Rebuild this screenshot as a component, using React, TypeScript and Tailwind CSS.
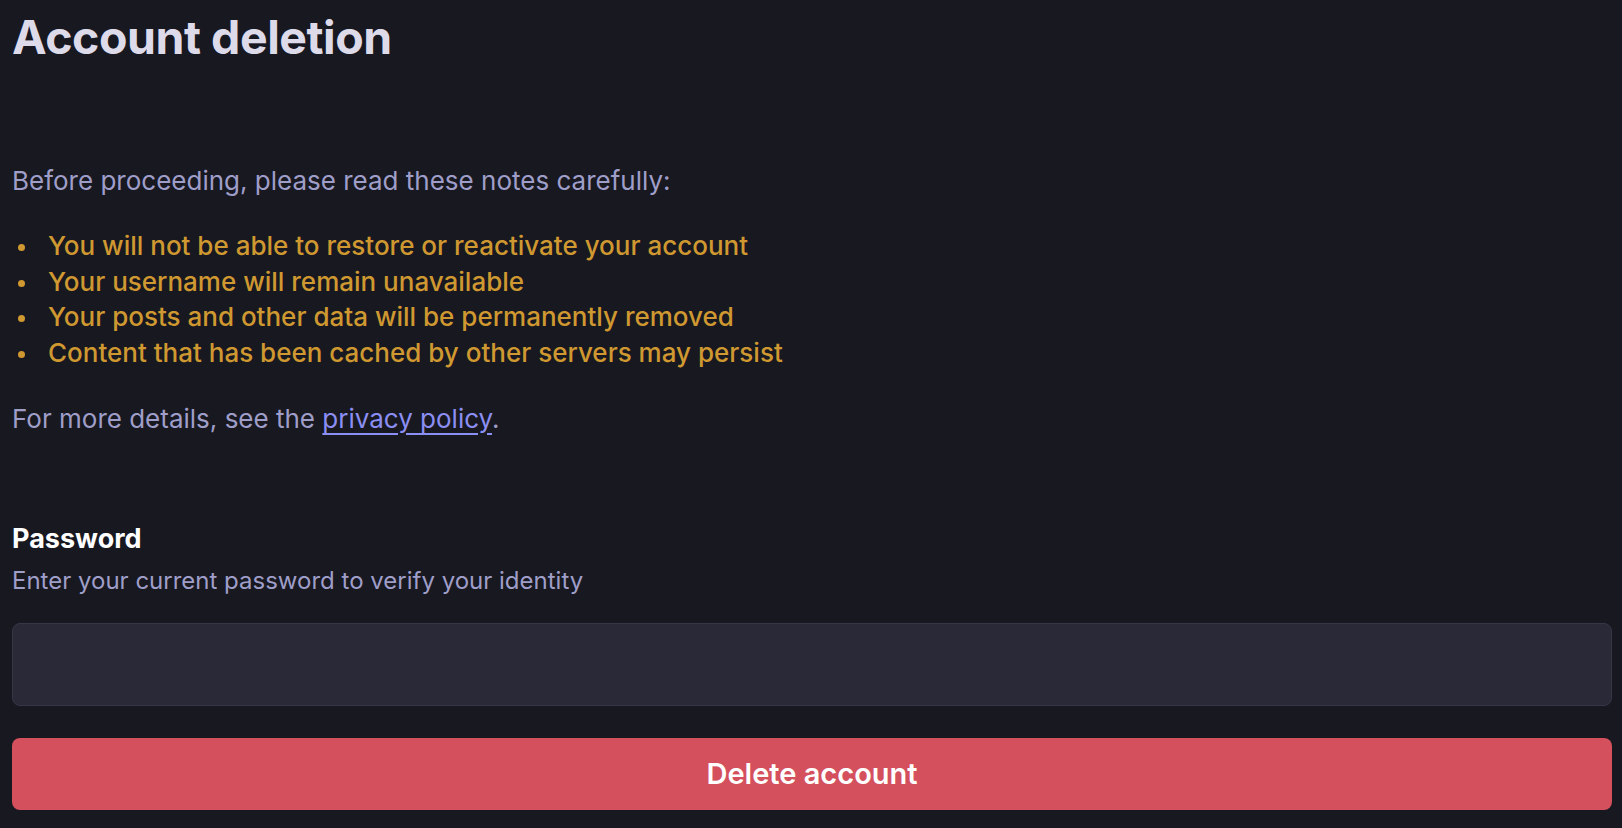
const notes = [
  "You will not be able to restore or reactivate your account",
  "Your username will remain unavailable",
  "Your posts and other data will be permanently removed",
  "Content that has been cached by other servers may persist",
];

export default function App() {
  return (
    <div
      className="min-h-screen bg-[#181820] pl-3 pr-[10px] pt-[9px]"
      style={{ fontFamily: "Inter, 'Noto Sans', sans-serif" }}
    >
      {/* Heading */}
      <h1 className="text-[46.5px] leading-[56px] font-bold text-[#dddbe9] tracking-[-0.01em]">
        Account deletion
      </h1>

      {/* Notes */}
      <div className="mt-[98px] text-[26px] leading-[36px] text-[#9f9ec9]">
        <p>Before proceeding, please read these notes carefully:</p>
        <ul className="mt-[29px] flex flex-col text-[#cf9830] font-medium">
          {notes.map((note) => (
            <li key={note} className="flex items-start leading-[35.7px]">
              <span className="mt-[16px] ml-[6px] mr-[23px] h-[7px] w-[7px] shrink-0 rounded-full bg-[#cf9830]" />
              <span>{note}</span>
            </li>
          ))}
        </ul>
        <p className="mt-[30px]">
          For more details, see the{" "}
          <a href="#" className="text-[#8b8ef2] underline underline-offset-[5px]">
            privacy policy
          </a>
          .
        </p>
      </div>

      {/* Password form */}
      <form className="mt-[84px] flex flex-col" onSubmit={(e) => e.preventDefault()}>
        <label className="text-[27px] leading-[36px] font-bold text-white">Password</label>
        <span className="mt-[6px] text-[24px] leading-[36px] text-[#9f9ec9]">
          Enter your current password to verify your identity
        </span>
        <input
          type="password"
          className="mt-[24px] h-[83px] w-full rounded-lg border border-[#363545] bg-[#2a2937] px-4 text-[26px] text-white outline-none"
        />
        <button
          type="submit"
          className="mt-[32px] h-[72px] w-full rounded-lg bg-[#d4505d] text-[29px] font-semibold text-white"
        >
          Delete account
        </button>
      </form>
    </div>
  );
}
